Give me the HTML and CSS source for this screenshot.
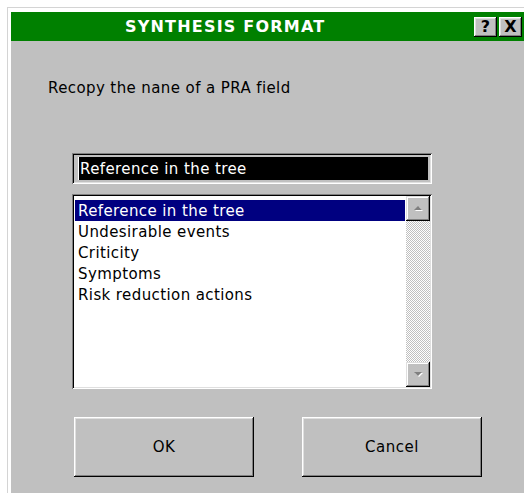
FILE: index.html
```html
<!DOCTYPE html>
<html lang="en">
<head>
<meta charset="utf-8">
<title>Synthesis format</title>
<link rel="stylesheet" href="styles.css">
</head>
<body>
<div class="window">
  <div class="titlebar">
    <span class="title">SYNTHESIS FORMAT</span>
    <div class="caption-buttons">
      <button class="cap-btn" type="button">?</button>
      <button class="cap-btn" type="button">X</button>
    </div>
  </div>
  <div class="dialog">
    <p class="prompt">Recopy the nane of a PRA field</p>
    <div class="field"><span class="field-text">Reference in the tree</span></div>
    <div class="listbox">
      <ul class="items">
        <li class="item selected">Reference in the tree</li>
        <li class="item">Undesirable events</li>
        <li class="item">Criticity</li>
        <li class="item">Symptoms</li>
        <li class="item">Risk reduction actions</li>
      </ul>
      <div class="scrollbar">
        <div class="sb-btn">
          <svg width="11" height="7" viewBox="0 0 11 7"><path d="M6 2 L10 6 H2 Z" fill="#fff"/><path d="M5 1 L9 5 H1 Z" fill="#808080"/></svg>
        </div>
        <div class="sb-track"></div>
        <div class="sb-btn">
          <svg width="11" height="7" viewBox="0 0 11 7"><path d="M2 2 H10 L6 6 Z" fill="#fff"/><path d="M1 1 H9 L5 5 Z" fill="#808080"/></svg>
        </div>
      </div>
    </div>
    <div class="actions">
      <button class="btn" type="button">OK</button>
      <button class="btn" type="button">Cancel</button>
    </div>
  </div>
</div>
</body>
</html>
```

FILE: styles.css
```css
html, body {
  margin: 0;
  padding: 0;
  overflow: hidden;
}

body {
  width: 524px;
  height: 493px;
  background: #fff;
  font-family: "DejaVu Sans", sans-serif;
  font-size: 15px;
  letter-spacing: 0.4px;
  color: #000;
}

/* Outer window frame: thin light edge, white margin, then the client area */
.window {
  margin: 7px 0 0 7px;
  border-top: 1px solid #d4d4d4;
  border-left: 1px solid #d4d4d4;
  padding: 4px 0 0 3px;
  width: 515px;
}

.titlebar {
  height: 29px;
  background: #008000;
  display: flex;
  align-items: center;
  padding-right: 4px;
}

.title {
  margin-left: 114px;
  color: #fff;
  font-weight: bold;
  font-size: 16px;
  letter-spacing: 1.2px;
}

.caption-buttons {
  margin-left: auto;
  display: flex;
  gap: 2px;
}

.cap-btn {
  width: 23px;
  height: 20px;
  padding: 0;
  background: #c0c0c0;
  border: none;
  box-shadow: inset -1px -1px #000, inset 1px 1px #fff, inset -2px -2px #808080, inset 2px 2px #dfdfdf;
  font-family: "DejaVu Sans", sans-serif;
  font-weight: bold;
  font-size: 16px;
  line-height: 20px;
  color: #000;
}

.dialog {
  background: #c0c0c0;
  height: 460px;
  padding: 0 0 0 61px;
  overflow: hidden;
}

.prompt {
  margin: 38px 0 0 -24px;
  line-height: 18px;
}

/* Sunken text field, contents selected */
.field {
  margin-top: 56px;
  width: 360px;
  height: 31px;
  box-sizing: border-box;
  padding: 4px 4px 4px 6px;
  background: #c0c0c0;
  box-shadow: inset 1px 1px #808080, inset -1px -1px #fff, inset 2px 2px #000, inset -2px -2px #dfdfdf;
}

.field-text {
  display: block;
  height: 23px;
  background: #000;
  color: #fff;
  line-height: 25px;
  padding-left: 1px;
  border-left: 1px solid #fff;
}

.listbox {
  margin-top: 10px;
  width: 360px;
  height: 195px;
  box-sizing: border-box;
  padding: 2px;
  background: #fff;
  display: flex;
  box-shadow: inset 1px 1px #808080, inset -1px -1px #fff, inset 2px 2px #000, inset -2px -2px #dfdfdf;
}

.items {
  list-style: none;
  margin: 0;
  padding: 4px 1px 0 1px;
  flex: 1;
}

.item {
  height: 21px;
  line-height: 23px;
  padding-left: 3px;
}

.item.selected {
  background: #000080;
  color: #fff;
}

.scrollbar {
  width: 24px;
  display: flex;
  flex-direction: column;
}

.sb-btn {
  height: 25px;
  background: #c0c0c0;
  box-shadow: inset -1px -1px #000, inset 1px 1px #dfdfdf, inset -2px -2px #808080, inset 2px 2px #fff;
  display: flex;
  align-items: center;
  justify-content: center;
}

.sb-track {
  flex: 1;
  background: repeating-conic-gradient(#c0c0c0 0 25%, #fff 0 50%) 0 0 / 2px 2px;
}

.actions {
  margin: 28px 0 0 2px;
  display: flex;
  gap: 48px;
}

.btn {
  width: 180px;
  height: 60px;
  padding: 0;
  background: #c0c0c0;
  border: none;
  box-shadow: inset -1px -1px #000, inset 1px 1px #fff, inset -2px -2px #808080, inset 2px 2px #dfdfdf;
  font-family: "DejaVu Sans", sans-serif;
  font-size: 15px;
  letter-spacing: 0.5px;
  color: #000;
}
```
